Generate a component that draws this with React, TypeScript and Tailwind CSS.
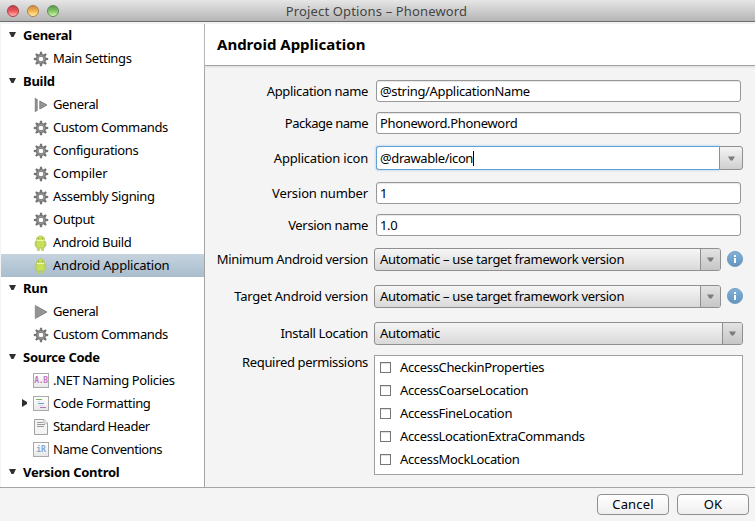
import type { ReactNode } from "react";

const TEETH = [0, 45, 90, 135, 180, 225, 270, 315];

function Gear() {
  return (
    <svg width="16" height="16" viewBox="0 0 16 16">
      <g fill="#757575">
        {TEETH.map((a) => (
          <path key={a} d="M7 .8h2l.6 3.400H6.400z" transform={`rotate(${a} 8 8)`} />
        ))}
      </g>
      <circle cx="8" cy="8" r="3.700" fill="none" stroke="#757575" strokeWidth="2.700" />
      <circle cx="8" cy="8" r="3.500" fill="none" stroke="#a2a2a2" strokeWidth="0.9" />
    </svg>
  );
}

function Android() {
  return (
    <svg width="16" height="16" viewBox="0 0 16 16">
      <g fill="#c8e055" stroke="#b0c26a" strokeWidth="0.7">
        <path d="M4.400 12h2.200v2.800a.8.8 0 0 1-2.200 0zM8.400 12h2.200v2.800a.8.8 0 0 1-2.200 0z" />
        <rect x="2" y="6.400" width="11" height="5" rx="1" />
        <path d="M3.400 5C3.400 2.400 5 .9 7.500.9s4.100 1.500 4.100 4.100V12c0 .6-.4 1-1 1H4.400c-.6 0-1-.4-1-1z" />
      </g>
      <path d="M3.800 5.500h7.400" stroke="#eef7c0" strokeWidth="0.9" />
      <path d="M5 3h1v1H5zM9 3h1v1H9z" fill="#7d8f35" />
    </svg>
  );
}

function StepPlay() {
  return (
    <svg width="16" height="16" viewBox="0 0 16 16">
      <path d="M2 1l2.500 1.500v11L2 15z" fill="#8c8c8c" stroke="#808080" strokeWidth="0.4" />
      <path d="M6.800 4l7.200 4-7.200 4z" fill="#959595" stroke="#7c7c7c" strokeWidth="0.9" />
    </svg>
  );
}

function Play() {
  return (
    <svg width="16" height="16" viewBox="0 0 16 16">
      <path d="M2.300 1.500L14 8 2.300 14.500z" fill="#949494" stroke="#7c7c7c" strokeWidth="0.8" />
    </svg>
  );
}

function Tile({ children }: { children?: ReactNode }) {
  return (
    <span className="flex h-[15px] w-4 shrink-0 items-center justify-center border border-[#a9a9a9] bg-linear-to-b from-white to-[#e8e8e8] font-['DejaVu_Sans_Mono',monospace] text-[8px] leading-none font-bold">
      {children}
    </span>
  );
}

function FormatIcon() {
  return (
    <Tile>
      <svg width="14" height="13" viewBox="0 0 14 13" className="shrink-0">
        <path d="M2 2h6v1H2z" fill="#74b45e" />
        <path d="M4 6h6v1H4z" fill="#6c9fd6" />
        <path d="M6 10h6v1H6z" fill="#bf6dbf" />
        <path d="M4 4h2v1H4zM5 8h4v1H5z" fill="#d8d8d8" />
      </svg>
    </Tile>
  );
}

function PageIcon() {
  return (
    <svg width="16" height="16" viewBox="0 0 16 16">
      <path d="M1.500.5h9.500l3.500 3.500v11.500h-13z" fill="#f4f4f4" stroke="#a0a0a0" />
      <path d="M11 .5V4h3.500" fill="#fff" stroke="#b0b0b0" />
      <path d="M4 3.500h6M4 5.500h8M4 7.500h7" stroke="#999" />
    </svg>
  );
}

const ICONS: Record<string, ReactNode> = {
  gear: <Gear />,
  android: <Android />,
  step: <StepPlay />,
  play: <Play />,
  ab: <Tile><span className="tracking-[-0.3px] text-[#c477c4]">A.B</span></Tile>,
  format: <FormatIcon />,
  page: <PageIcon />,
  ir: <Tile><span className="text-[#82aad6]">iR</span></Tile>,
};

function Group({ label }: { label: string }) {
  return (
    <div className="flex h-[23px] shrink-0 items-center pl-2 font-bold">
      <svg width="7" height="6" viewBox="0 0 7 6" className="mr-[7px] -translate-y-px">
        <path d="M0 0h7L4.500 5h-2z" fill="#303030" />
      </svg>
      <span className="tracking-[-0.25px]">{label}</span>
    </div>
  );
}

interface ItemProps {
  icon: string;
  label: string;
  selected?: boolean;
  expandable?: boolean;
  tracking?: string;
}

function Item({ icon, label, selected, expandable, tracking = "tracking-[-0.37px]" }: ItemProps) {
  return (
    <div className={selected ? "flex h-[23px] shrink-0 items-center bg-linear-to-b from-[#c5d3de] to-[#a9bdcd]" : "flex h-[23px] shrink-0 items-center"}>
      <span className="flex w-8 justify-end pr-[5px]">
        {expandable && (
          <svg width="6" height="8" viewBox="0 0 6 8" className="-translate-y-px">
            <path d="M0 0l5 3v2L0 8z" fill="#303030" />
          </svg>
        )}
      </span>
      <span className="mr-1 flex w-4 justify-center">{ICONS[icon]}</span>
      <span className={tracking}>{label}</span>
    </div>
  );
}

interface RowProps {
  label: string;
  className: string;
  tracking?: string;
  children: ReactNode;
}

function Row({ label, className, tracking = "tracking-[-0.34px]", children }: RowProps) {
  return (
    <div className={`flex items-center ${className}`}>
      <label className={`w-[163px] shrink-0 text-right whitespace-nowrap ${tracking}`}>{label}</label>
      {children}
    </div>
  );
}

function Field({ value }: { value: string }) {
  return (
    <div className="ml-2 flex h-[22px] w-[365px] items-center rounded-[3px] border border-[#989898] bg-white pl-[3px] tracking-[-0.33px] shadow-[inset_0_1px_1px_#e6e6e6]">
      {value}
    </div>
  );
}

function Arrow() {
  return (
    <svg width="7" height="5" viewBox="0 0 7 5">
      <path d="M0 .5h7L4.500 4.500h-2z" fill="#7c7c7c" />
    </svg>
  );
}

function Combo({ value, wide }: { value: string; wide?: boolean }) {
  return (
    <div className={`ml-1.5 flex h-[23px] overflow-hidden rounded-[3px] border border-[#8f8f8f] bg-linear-to-b from-[#f6f6f6] to-[#d9d9d9] ${wide ? "w-[369px]" : "w-[347px]"}`}>
      <span className="flex flex-1 items-center pl-[5px] tracking-[-0.3px]">{value}</span>
      <span className="flex w-[20px] items-center justify-center border-l border-[#8f8f8f] bg-linear-to-b from-[#e3e3e3] to-[#c6c6c6]">
        <Arrow />
      </span>
    </div>
  );
}

function Info() {
  return (
    <svg width="16" height="16" viewBox="0 0 16 16" className="ml-1.5 -translate-y-px">
      <defs>
        <linearGradient id="info" x2="0" y2="1">
          <stop stopColor="#82b2da" />
          <stop offset="1" stopColor="#6294bf" />
        </linearGradient>
      </defs>
      <circle cx="8" cy="8" r="7.600" fill="url(#info)" stroke="#6a96bb" strokeWidth="0.8" />
      <path d="M7 4h2v2H7zM7 7h2v5H7z" fill="#fff" />
    </svg>
  );
}

function Light({ className }: { className: string }) {
  return <span className={`h-3 w-3 rounded-full border ${className}`} />;
}

const PERMISSIONS = [
  "AccessCheckinProperties",
  "AccessCoarseLocation",
  "AccessFineLocation",
  "AccessLocationExtraCommands",
  "AccessMockLocation",
];

export default function App() {
  return (
    <div className="flex h-[521px] w-[755px] flex-col overflow-hidden bg-[#f4f4f4] font-['Noto_Sans',sans-serif] text-[13px] leading-none text-black">
      <header className="flex h-[22px] shrink-0 items-center border-b border-[#6c6c6c] bg-linear-to-b from-[#e6e6e6] to-[#b5b5b5]">
        <div className="flex w-[67px] gap-2 pl-[7px]">
          <Light className="border-[#a44448] bg-linear-to-b from-[#bb4349] via-[#ee555b] to-[#ffb5b2]" />
          <Light className="border-[#b08045] bg-linear-to-b from-[#cc8745] via-[#f5b54f] to-[#ffeea5]" />
          <Light className="border-[#5f8c53] bg-linear-to-b from-[#5c974f] via-[#83c568] to-[#d1f5af]" />
        </div>
        <h1 className="flex-1 pt-px pr-[69px] text-center tracking-[0.15px] text-[#444]">Project Options – Phoneword</h1>
      </header>

      <div className="flex h-[466px] shrink-0 border-b border-[#a5a5a5] pt-0.5 pl-px">
        <nav className="flex w-[204px] shrink-0 flex-col border-r border-[#a5a5a5] bg-white">
          <Group label="General" />
          <Item icon="gear" label="Main Settings" />
          <Group label="Build" />
          <Item icon="step" label="General" />
          <Item icon="gear" label="Custom Commands" />
          <Item icon="gear" label="Configurations" />
          <Item icon="gear" label="Compiler" tracking="tracking-[-0.15px]" />
          <Item icon="gear" label="Assembly Signing" />
          <Item icon="gear" label="Output" />
          <Item icon="android" label="Android Build" />
          <Item icon="android" label="Android Application" tracking="tracking-[-0.22px]" selected />
          <Group label="Run" />
          <Item icon="play" label="General" />
          <Item icon="gear" label="Custom Commands" />
          <Group label="Source Code" />
          <Item icon="ab" label=".NET Naming Policies" />
          <Item icon="format" label="Code Formatting" expandable />
          <Item icon="page" label="Standard Header" tracking="tracking-[-0.48px]" />
          <Item icon="ir" label="Name Conventions" tracking="tracking-[-0.45px]" />
          <Group label="Version Control" />
        </nav>

        <main className="flex flex-1 flex-col">
          <h2 className="flex h-[42px] items-center border-b border-[#a5a5a5] bg-white pl-3 text-[15px] font-bold shadow-[0_1px_2px_#d8d8d8]">
            Android Application
          </h2>
          <Row label="Application name" className="mt-3.5 h-[22px]"><Field value="@string/ApplicationName" /></Row>
          <Row label="Package name" className="mt-2.5 h-[22px]" tracking="tracking-[-0.5px]"><Field value="Phoneword.Phoneword" /></Row>
          <Row label="Application icon" className="mt-3 h-6" tracking="tracking-[-0.2px]">
            <div className="ml-2 flex h-6 w-[343px] items-center rounded-l-[3px] border border-r-0 border-[#63a0d4] bg-white pl-[3px] tracking-[-0.4px] shadow-[0_0_2px_1px_#c8dff2]">
              @drawable/icon<span className="h-[15px] w-px bg-black" />
            </div>
            <div className="z-10 flex h-6 w-6 items-center justify-center rounded-r-[3px] border border-[#8f8f8f] bg-linear-to-b from-[#f4f4f4] to-[#cfcfcf]">
              <Arrow />
            </div>
          </Row>
          <Row label="Version number" className="mt-3 h-[22px]" tracking="tracking-[-0.15px]"><Field value="1" /></Row>
          <Row label="Version name" className="mt-2.5 h-[22px]"><Field value="1.0" /></Row>
          <Row label="Minimum Android version" className="mt-3 h-[23px]">
            <Combo value="Automatic – use target framework version" /><Info />
          </Row>
          <Row label="Target Android version" className="mt-3.5 h-[23px]" tracking="tracking-[-0.24px]">
            <Combo value="Automatic – use target framework version" /><Info />
          </Row>
          <Row label="Install Location" className="mt-3.5 h-[23px]"><Combo value="Automatic" wide /></Row>
          <div className="mt-2.5 flex h-[120px]">
            <span className="w-[163px] shrink-0 pt-px text-right tracking-[-0.34px]">Required permissions</span>
            <ul className="ml-1.5 w-[369px] border border-[#a0a0a0] bg-white pl-[5px]">
              {PERMISSIONS.map((name) => (
                <li key={name} className="flex h-[23px] items-center tracking-[-0.34px]">
                  <span className="mr-[9px] h-[11px] w-[11px] border border-[#777] bg-white shadow-[inset_0_1px_1px_#ddd]" />
                  {name}
                </li>
              ))}
            </ul>
          </div>
        </main>
      </div>

      <footer className="flex justify-end gap-2 pt-1.5 pr-1.5">
        <button className="h-[21px] w-[72px] rounded-[4px] border border-[#8f8f8f] bg-linear-to-b from-white to-[#efefef] tracking-[0.15px]">Cancel</button>
        <button className="h-[21px] w-[72px] rounded-[4px] border border-[#8f8f8f] bg-linear-to-b from-white to-[#efefef] tracking-[0.15px]">OK</button>
      </footer>
    </div>
  );
}
